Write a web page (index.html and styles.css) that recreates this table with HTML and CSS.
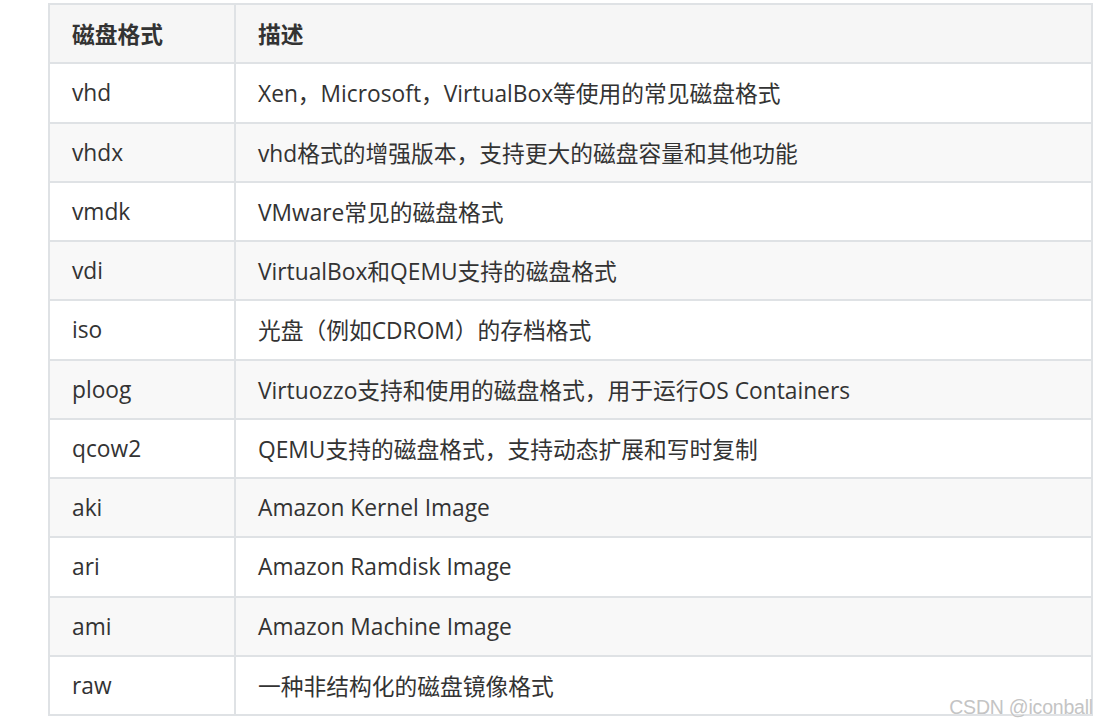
FILE: index.html
```html
<!DOCTYPE html>
<html lang="zh-CN">
<head>
<meta charset="utf-8">
<link rel="stylesheet" href="styles.css">
</head>
<body>
<div class="page">
  <table class="fmt-table">
    <thead>
      <tr><th class="c1">磁盘格式</th><th>描述</th></tr>
    </thead>
    <tbody>
      <tr><td>vhd</td><td>Xen，Microsoft，VirtualBox等使用的常见磁盘格式</td></tr>
      <tr><td>vhdx</td><td>vhd格式的增强版本，支持更大的磁盘容量和其他功能</td></tr>
      <tr><td>vmdk</td><td>VMware常见的磁盘格式</td></tr>
      <tr><td>vdi</td><td>VirtualBox和QEMU支持的磁盘格式</td></tr>
      <tr><td>iso</td><td>光盘（例如CDROM）的存档格式</td></tr>
      <tr><td>ploog</td><td>Virtuozzo支持和使用的磁盘格式，用于运行OS Containers</td></tr>
      <tr><td>qcow2</td><td>QEMU支持的磁盘格式，支持动态扩展和写时复制</td></tr>
      <tr><td>aki</td><td>Amazon Kernel Image</td></tr>
      <tr><td>ari</td><td>Amazon Ramdisk Image</td></tr>
      <tr><td>ami</td><td>Amazon Machine Image</td></tr>
      <tr><td>raw</td><td>一种非结构化的磁盘镜像格式</td></tr>
    </tbody>
  </table>
  <div class="watermark">CSDN @iconball</div>
</div>
</body>
</html>
```

FILE: styles.css
```css
html, body {
  margin: 0;
  padding: 0;
  background: #ffffff;
}

.page {
  position: relative;
  width: 1097px;
  height: 724px;
  overflow: hidden;
  padding-top: 3px;
  padding-left: 48px;
  box-sizing: border-box;
}

.fmt-table {
  border-collapse: collapse;
  width: 1045px;
  table-layout: fixed;
  font-family: "Open Sans", "Noto Sans CJK SC", sans-serif;
  font-size: 22.75px;
  color: #333333;
}

.fmt-table th,
.fmt-table td {
  border: 2px solid #dfe2e5;
  height: 59.25px;
  padding: 0 0 0 22px;
  text-align: left;
  vertical-align: middle;
  white-space: nowrap;
  box-sizing: border-box;
}

.fmt-table th.c1 {
  width: 186px;
}

.fmt-table th {
  font-weight: 700;
  background: #f6f6f6;
}

.fmt-table tbody tr:nth-child(even) td {
  background: #f8f8f8;
}

.watermark {
  position: absolute;
  right: 4px;
  bottom: 5px;
  font-family: "Liberation Sans", Arial, sans-serif;
  font-size: 19.5px;
  color: #c4c4c4;
  letter-spacing: -0.2px;
  text-shadow: 0 0 1px #ffffff;
}
```
